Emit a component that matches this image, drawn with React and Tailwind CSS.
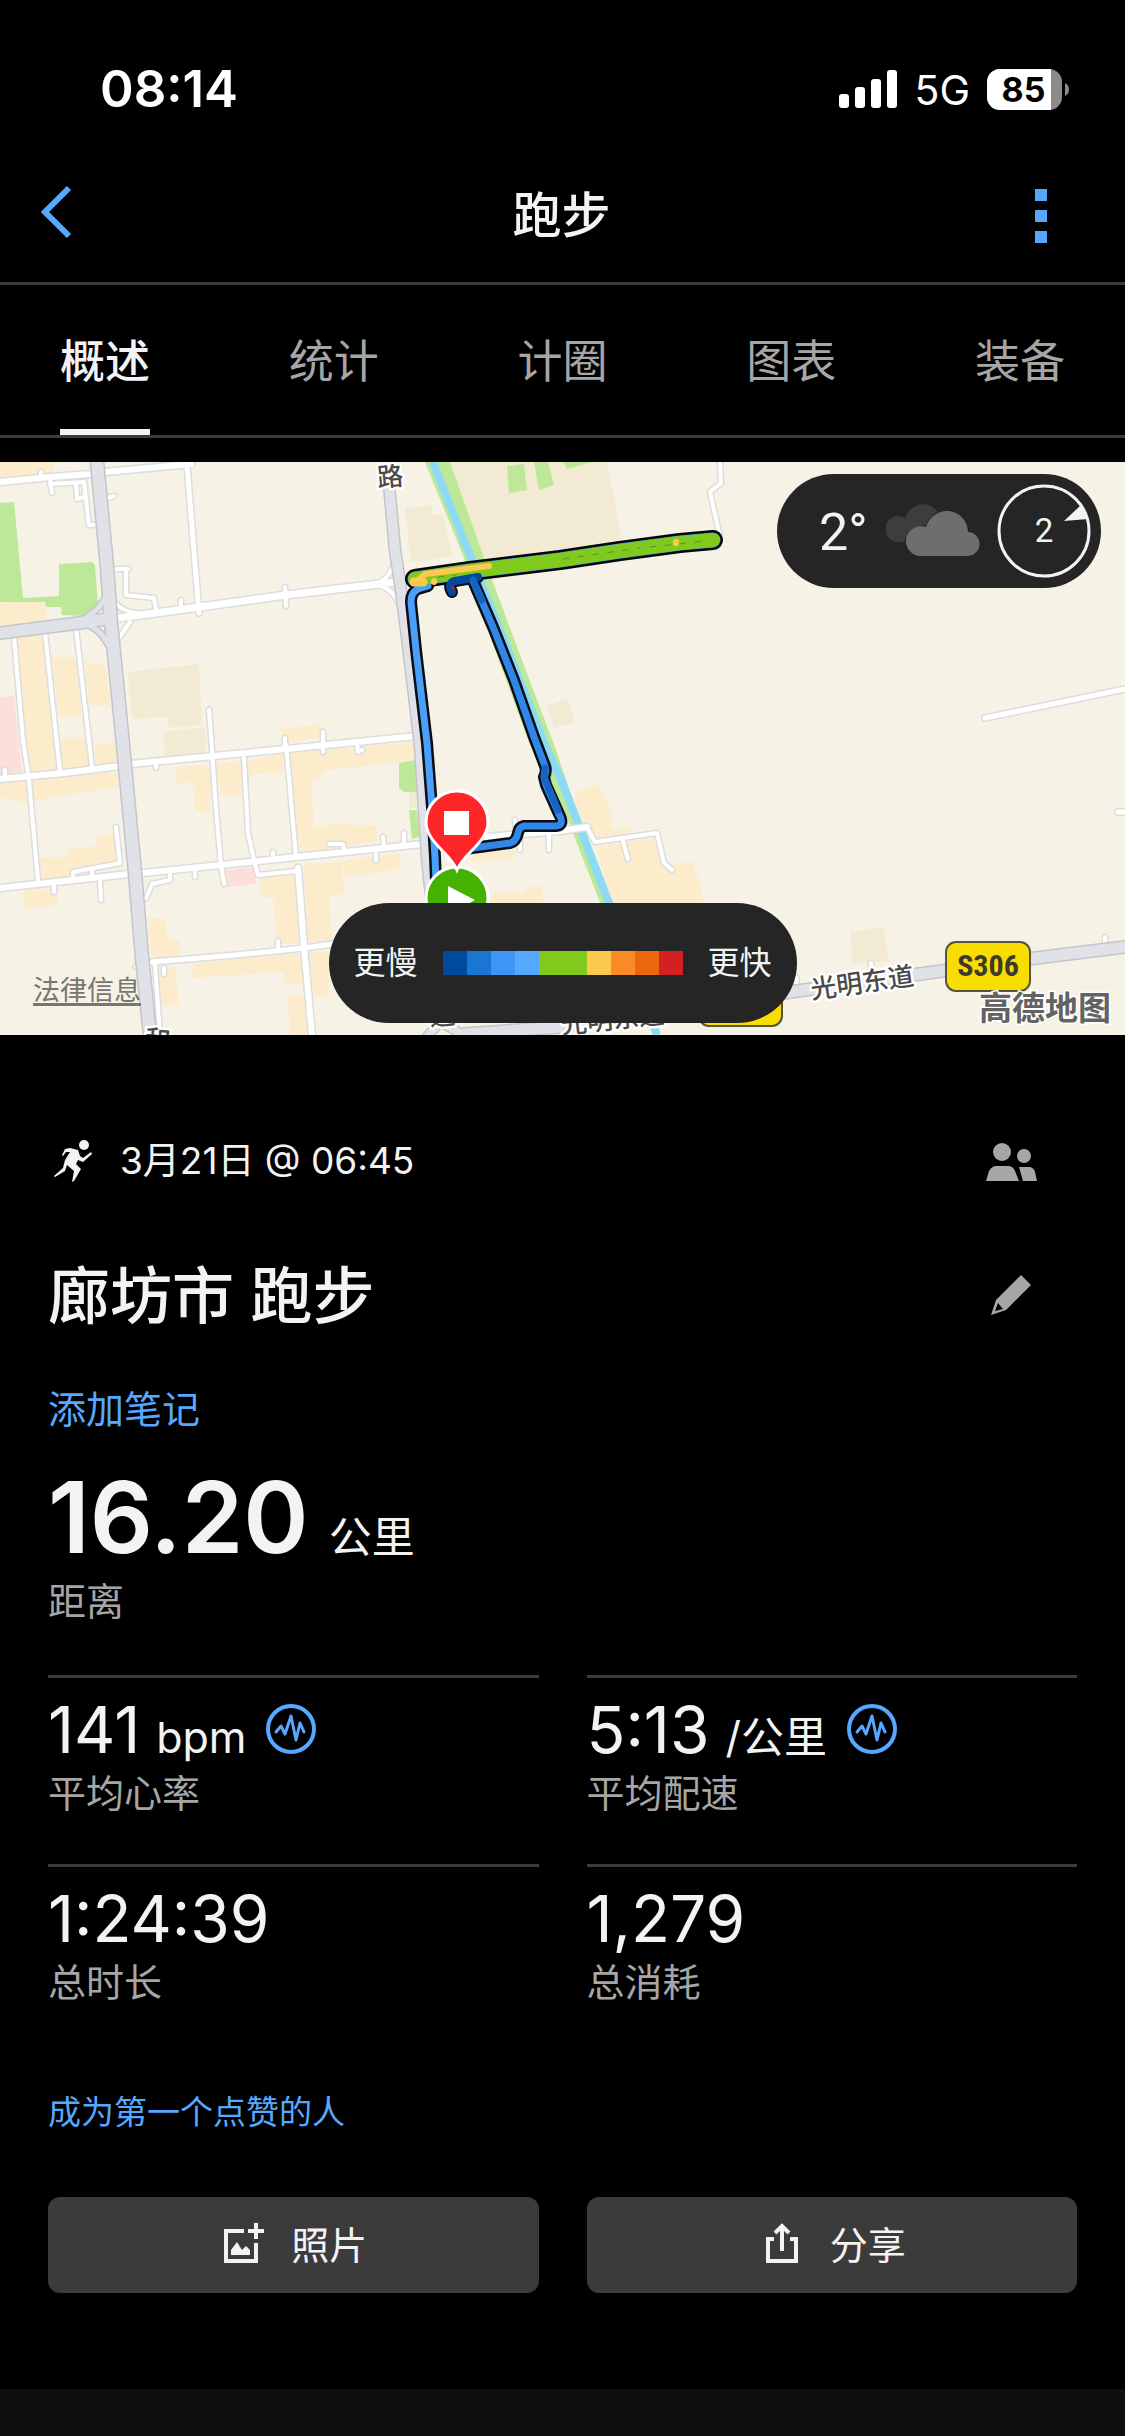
import React from "react";

const TABS = ["概述", "统计", "计圈", "图表", "装备"];

const PACE_COLORS = [
  "bg-[#004a9e]",
  "bg-[#1976d2]",
  "bg-[#3d96f5]",
  "bg-[#56a8ff]",
  "bg-[#82c91e]",
  "bg-[#82c91e]",
  "bg-[#fcc94d]",
  "bg-[#fb8b28]",
  "bg-[#ea670e]",
  "bg-[#d32022]",
];

const GREENS = [
  "0,503 14,502 23,598 59,596 59,564 92,562 95,565 98,605 82,616 62,615 61,607 46,607 45,602 0,602",
  "507,466 524,464 527,490 509,493",
  "534,462 548,462 554,485 539,490",
  "563,462 592,462 567,469",
  "399,763 416,760 417,792 404,792 399,788",
  "409,810 417,810 420,837 412,839",
];

const TANS = [
  "128,672 199,664 202,725 170,728 166,717 132,719",
  "163,732 205,727 206,754 165,757",
  "405,508 432,505 432,514 443,515 452,556 411,562",
  "450,462 607,462 622,540 484,562",
  "546,706 567,699 575,722 554,728",
  "850,932 883,927 889,962 853,964",
  "409,792 417,792 417,808 409,808",
];

const YELLOWS = [
  "0,462 54,462 54,473 0,480",
  "0,603 39,599 46,607 47,620 0,626",
  "17,637 42,635 57,772 28,775",
  "52,658 76,657 82,715 59,718",
  "85,662 106,666 110,706 89,706",
  "61,738 86,737 90,767 62,771",
  "94,746 114,742 118,763 95,767",
  "0,782 118,772 118,787 25,802 0,798",
  "40,858 67,857 68,850 97,845 97,836 114,833 116,863 71,868 71,877 40,880",
  "23,891 57,888 57,905 25,909",
  "148,918 164,918 168,940 180,940 180,958 152,960",
  "155,967 175,967 179,1005 161,1006",
  "193,963 302,953 304,983 285,983 283,972 192,978",
  "307,952 329,951 329,995 308,997",
  "288,996 305,995 309,1035 290,1035",
  "260,875 296,873 299,943 278,944 273,898 261,898",
  "304,864 342,862 344,894 329,896 332,940 307,942",
  "343,860 400,853 401,869 345,877",
  "176,767 211,765 210,811 195,811 195,790 189,782 177,784",
  "215,763 242,761 242,795 221,795",
  "248,760 286,753 284,772 248,775",
  "289,753 416,742 416,760 322,771 322,779 311,780 314,828 326,828 329,824 376,826 377,842 299,853",
  "282,728 323,725 324,738 282,743",
  "471,855 516,850 516,858 471,862",
  "491,893 525,893 527,887 541,886 545,905 491,905",
  "575,792 594,784 600,787 612,815 612,830 630,827 632,835 597,842 590,828 575,810",
  "596,847 657,837 664,865 693,862 705,905 612,905",
];

const PINKS = ["0,697 14,696 22,772 0,775", "226,870 255,867 256,884 227,887"];

const GRAY_ROADS = [
  { d: "M97 462L107 567L111 623L123 745L135 873L142 957L150 1035", w: 12 },
  { d: "M0 633L79 623L107 619", w: 11 },
  { d: "M76 623Q96 614 104 600", w: 5 },
  { d: "M82 623Q98 626 108 644", w: 5 },
  { d: "M389 485L395 550L400 583L407 637L420 745L427 857L434 925", w: 10 },
  { d: "M1125 947L1028 959L913 975L783 993L640 1012L560 1027L464 1034", w: 11 },
  { d: "M424 1040L440 1022L462 1034", w: 8 },
];

const WHITE_ROADS = [
  { d: "M0 482L50 477L92 474M105 472L191 464", w: 6 },
  { d: "M41 472V477M50 480L52 493M50 484L84 482L89 525H96M76 484L77 499L85 497M108 498L114 496", w: 4 },
  { d: "M187 465L199 613", w: 5 },
  { d: "M118 618L200 607L286 595L379 584L396 582", w: 7 },
  { d: "M116 603Q122 612 143 614M130 622L119 638M379 583Q391 576 395 560M379 585Q394 590 399 604", w: 4 },
  { d: "M285 587L286 606M181 600V608M115 569H128M126 569V595L154 598L156 610", w: 4 },
  { d: "M14 637L23 740L29 780L38 880M45 632L60 772M76 628L92 767", w: 4 },
  { d: "M5 770V776", w: 4 },
  { d: "M0 779L64 773L120 766M131 764L214 756L286 749L416 736", w: 6 },
  { d: "M0 888L129 874M143 873L221 865L296 857L423 844M487 837L560 831L587 827", w: 6 },
  { d: "M587 827L595 842L657 833L664 863L672 870M622 838L628 859", w: 4 },
  { d: "M209 710L212 750L216 810L221 865L224 884M244 758L248 833L254 860L258 875L296 871M286 744L296 857", w: 4 },
  { d: "M298 868L304 947L312 1035", w: 6 },
  { d: "M152 962L236 955L304 948L332 944", w: 5 },
  { d: "M155 964L160 1035M116 827L120 863L73 872V878M92 869V875", w: 4 },
  { d: "M100 878L101 900M54 885V892M195 870V877M170 872V880L152 884L146 898M323 732V752M285 738V745M156 766V768M357 743L358 752L362 750", w: 4 },
  { d: "M273 852V858M383 837L384 847M404 833V844M329 844H343L344 848M515 820L517 834M520 838V850M549 835V850M376 854V860M278 941V948M136 967H140M164 968V974", w: 4 },
  { d: "M720 462L721 483L710 492L720 537", w: 4 },
  { d: "M985 718L1125 689M1118 812H1125", w: 5 },
  { d: "M1105 937V946M871 963L872 975M796 977L797 988", w: 4 },
];

function RoadSet({ roads, casing, fill }) {
  return (
    <g fill="none" strokeLinecap="round" strokeLinejoin="round">
      {roads.map((r) => (
        <path key={"c" + r.d} d={r.d} stroke={casing} strokeWidth={r.w + 3} />
      ))}
      {roads.map((r) => (
        <path key={r.d} d={r.d} stroke={fill} strokeWidth={r.w} />
      ))}
    </g>
  );
}

function Polys({ items, fill }) {
  return items.map((p) => <polygon key={p} points={p} fill={fill} />);
}

function MapLabel({ x, y, rotate, children }) {
  return (
    <text
      transform={`translate(${x} ${y}) rotate(${rotate})`}
      className="font-['Noto_Sans_CJK_SC',sans-serif] text-[26px] font-medium"
      fill="#4a4a4a"
      stroke="#ffffff"
      strokeWidth="5"
      strokeLinejoin="round"
      paintOrder="stroke"
    >
      {children}
    </text>
  );
}

function RouteMap() {
  const west = "M428 586L418 589Q411 592 411 602L416 650L427 743L432 807L435 857L437 905";
  const east = "M471 576L493 627L514 680L534 737L545 766Q547 771 544 777L546 785L559 814Q565 825 556 826L524 826Q519 827 518 833Q516 842 510 843L480 847L456 850";
  const north = "M415 579L470 571L560 560L620 551L680 543L713 540";
  const start = "M452 592Q447 583 455 581L478 577";
  return (
    <svg className="block h-[573px] w-full" viewBox="0 462 1125 573" preserveAspectRatio="xMidYMid slice" role="img" aria-label="路线地图">
      <rect x="0" y="462" width="1125" height="573" fill="#f6f2e6" />
      <Polys items={TANS} fill="#f3ead4" />
      <Polys items={YELLOWS} fill="#fceccb" />
      <Polys items={PINKS} fill="#fcdfdb" />
      <Polys items={GREENS} fill="#bde898" />
      <polygon points="425,462 450,462 484,558 520,655 556,750 576,810 613,905 601,905 566,815 530,745 495,650 464,558" fill="#bde898" />
      <path d="M433 462L471 558L504 640L545 745L560 777L582 833L609 903L657 1035" fill="none" stroke="#8cdaf4" strokeWidth="8" />
      <RoadSet roads={WHITE_ROADS} casing="#dcdddd" fill="#ffffff" />
      <RoadSet roads={GRAY_ROADS} casing="#c4c5ca" fill="#e1e2e7" />

      <MapLabel x="378" y="487" rotate="-5">路</MapLabel>
      <MapLabel x="144" y="1048" rotate="5">和</MapLabel>
      <MapLabel x="430" y="1026" rotate="-5">道</MapLabel>
      <MapLabel x="812" y="999" rotate="-8">光明东道</MapLabel>
      <MapLabel x="562" y="1034" rotate="-6">光明东道</MapLabel>

      <g fill="#f9dc00" stroke="#55543c" strokeWidth="2">
        <rect x="946" y="942" width="84" height="49" rx="10" />
        <rect x="699" y="977" width="83" height="49" rx="10" />
      </g>
      <text x="988" y="976" textAnchor="middle" fill="#3b3a2c" className="font-['Liberation_Sans_Narrow','Roboto_Condensed','Open_Sans',sans-serif] text-[30px] font-bold">
        S306
      </text>

      <g fill="none" strokeLinecap="round" strokeLinejoin="round">
        <path d={west} stroke="#0b0f14" strokeWidth="12" />
        <path d={east} stroke="#0b0f14" strokeWidth="12" />
        <path d={start} stroke="#0b1020" strokeWidth="12" />
        <path d={north} stroke="#050805" strokeWidth="20" />
        <path d={west} stroke="#4a9ffb" strokeWidth="7" />
        <path d={east} stroke="#3087e8" strokeWidth="7" />
        <path d={north} stroke="#3d96f5" strokeWidth="15" />
        <path d={north} stroke="#82c91e" strokeWidth="14" />
        <path d="M438 577L456 575M563 559L640 548M650 547L705 541" stroke="#55952a" strokeWidth="1" strokeDasharray="6 9" />
        <path d="M416 582L425 574L489 566" stroke="#fcc94d" strokeWidth="6" />
        <path d="M414 582H423" stroke="#fcc94d" strokeWidth="9" />
        <path d="M434 581V582M676 542V543" stroke="#fcc94d" strokeWidth="6" />
        <path d={start} stroke="#004a9e" strokeWidth="8" />
        <path d="M473 580L482 600M545 768L544 777L558 810" stroke="#1464c0" strokeWidth="7" />
        <path d="M452 587L454 589" stroke="#d32022" strokeWidth="2" />
      </g>

      <circle cx="457" cy="898" r="31" fill="#45b100" stroke="#ffffff" strokeWidth="3" />
      <polygon points="448,886 475,900 448,915" fill="#ffffff" />
      <path d="M457 870C450 853 426 842 426 822A31 31 0 0 1 488 822C488 842 464 853 457 870Z" fill="#ff262a" stroke="#ffffff" strokeWidth="3" />
      <rect x="444" y="811" width="25" height="24" fill="#ffffff" />

      <text
        x="979"
        y="1020"
        className="font-['Noto_Sans_CJK_SC',sans-serif] text-[33px] font-bold"
        fill="#636363"
        stroke="#ffffff"
        strokeWidth="3"
        paintOrder="stroke"
      >
        高德地图
      </text>
    </svg>
  );
}

function Weather() {
  return (
    <div className="absolute right-6 top-3 flex h-[114px] w-[324px] items-center rounded-full bg-[#252525] pl-[42px] pr-[9px] text-[#f3f3f3]">
      <span className="w-[67px] pt-1 font-['Roboto',sans-serif] text-[52px] leading-[60px]">2°</span>
      <svg className="h-[54px] w-[96px]" viewBox="0 0 96 54" aria-hidden="true">
        <path d="M14 38A13 13 0 1 1 19 14C23 4 31 0 37 0C43 0 49 4 52 8Q43 12 40 21Q22 22 18 38Z" fill="#3d3d3d" />
        <path d="M33 52A15 15 0 1 1 40 23C43 13 52 7 61 7C73 7 82 17 82 28A12 12 0 0 1 81 52Z" fill="#6e6e6e" />
      </svg>
      <div className="relative ml-auto flex h-[96px] w-[96px] items-center justify-center">
        <svg className="absolute inset-0 h-full w-full" viewBox="0 0 96 96" aria-hidden="true">
          <circle cx="48" cy="48" r="45" fill="none" stroke="#f3f3f3" strokeWidth="3" />
          <polygon points="68,38 85,22 92,36" fill="#f3f3f3" />
        </svg>
        <span className="font-['Roboto',sans-serif] text-[33px] leading-[40px]">2</span>
      </div>
    </div>
  );
}

function PaceLegend() {
  return (
    <div className="absolute inset-x-0 bottom-3 flex justify-center">
      <div className="flex h-[120px] w-[468px] items-center justify-between rounded-[60px] bg-[#252525] px-[25px] text-[32px] leading-[48px] text-[#f3f3f3]">
        <span>更慢</span>
        <div className="flex">
          {PACE_COLORS.map((c, i) => (
            <span key={i} className={"h-6 w-6 " + c} />
          ))}
        </div>
        <span>更快</span>
      </div>
    </div>
  );
}

function StatusBar() {
  return (
    <div className="flex h-[135px] items-end justify-between pb-[15px] pl-[100px] pr-[56px] text-white">
      <span className="text-[51px] font-semibold leading-[62px]">08:14</span>
      <div className="flex h-[62px] items-center gap-[17px]">
        <svg className="h-[38px] w-[58px]" viewBox="0 0 58 38" fill="#ffffff" aria-hidden="true">
          <rect x="0" y="24" width="10" height="14" rx="3" />
          <rect x="16" y="17" width="10" height="21" rx="3" />
          <rect x="32" y="9" width="10" height="29" rx="3" />
          <rect x="48" y="0" width="10" height="38" rx="3" />
        </svg>
        <span className="pt-[2px] text-[41px] leading-[48px]">5G</span>
        <div className="relative flex h-[41px] w-[82px] items-center">
          <svg className="absolute inset-0 h-full w-full" viewBox="0 0 82 41" aria-hidden="true">
            <rect x="0" y="0" width="75" height="41" rx="13" fill="#8b8b8b" />
            <path d="M13 0H64V41H13A13 13 0 0 1 0 28V13A13 13 0 0 1 13 0Z" fill="#ffffff" />
            <path d="M78 14Q82 16 82 20.500T78 27Z" fill="#8b8b8b" />
          </svg>
          <span className="relative w-[73px] text-center text-[34px] font-bold leading-[41px] text-black">85</span>
        </div>
      </div>
    </div>
  );
}

function PulseIcon() {
  return (
    <svg className="h-[51px] w-[51px]" viewBox="0 0 51 51" fill="none" stroke="#56a8ff" aria-hidden="true">
      <circle cx="25" cy="25" r="23" strokeWidth="4" />
      <path d="M10 28L15 22L19 30L25 12L30 36L34 19L38 28" strokeWidth="3" strokeLinejoin="round" strokeLinecap="round" />
    </svg>
  );
}

function Stat({ value, unit, label, pulse }) {
  return (
    <div className="border-t-[3px] border-[#3c3c3c] pb-[47px] pt-[18px]">
      <div className="flex h-[66px] items-baseline">
        <span className="text-[64px] leading-[68px]">{value}</span>
        {unit && <span className="ml-4 text-[43px] leading-[66px]">{unit}</span>}
        {pulse && (
          <button type="button" aria-label="查看图表" className="ml-5 mt-2 self-start">
            <PulseIcon />
          </button>
        )}
      </div>
      <div className="mt-[7px] text-[38px] leading-[48px] text-[#a6a6a6]">{label}</div>
    </div>
  );
}

export default function App() {
  return (
    <div className="flex min-h-screen flex-col bg-black font-['Inter','Noto_Sans_CJK_SC',sans-serif] text-[#f3f3f3]">
      <StatusBar />

      <header className="grid h-[150px] grid-cols-3 items-center border-b-[3px] border-[#3c3c3c] pl-[38px] pr-[78px] pt-[15px]">
        <button type="button" aria-label="返回" className="w-12 pb-2">
          <svg className="h-[60px] w-[36px]" viewBox="0 0 36 60" fill="none" stroke="#56a8ff" strokeWidth="6" aria-hidden="true">
            <path d="M31 6L7 30L31 54" />
          </svg>
        </button>
        <h1 className="pl-[38px] text-center text-[49px] font-medium leading-[60px]">跑步</h1>
        <button type="button" aria-label="更多" className="grid w-3 gap-[9px] justify-self-end">
          <span className="h-3 bg-[#56a8ff]" />
          <span className="h-3 bg-[#56a8ff]" />
          <span className="h-3 bg-[#56a8ff]" />
        </button>
      </header>

      <nav className="flex h-[153px] justify-between border-b-[3px] border-[#3c3c3c] px-[60px]" aria-label="活动">
        {TABS.map((tab, i) => (
          <button
            key={tab}
            type="button"
            aria-current={i === 0 ? "page" : undefined}
            className={
              i === 0
                ? "border-b-[6px] border-[#f3f3f3] pt-[9px] text-[45px] font-medium leading-[60px]"
                : "border-b-[6px] border-transparent pt-[9px] text-[45px] leading-[60px] text-[#a6a6a6]"
            }
          >
            {tab}
          </button>
        ))}
      </nav>

      <section className="relative mt-6">
        <RouteMap />
        <Weather />
        <a href="#legal" className="absolute bottom-[26px] left-[33px] text-[27px] leading-[36px] text-[#777670] underline decoration-[3px] underline-offset-[3px]">
          法律信息
        </a>
        <PaceLegend />
      </section>

      <main className="px-12 pb-24 pt-[102px]">
        <div className="flex items-center">
          <svg className="h-12 w-12" viewBox="0 0 48 48" aria-hidden="true" fill="#f3f3f3">
            <circle cx="36" cy="8" r="5" />
            <path d="M22 11L30 13L32 19L35 21L43 15L44 17L35 25L30 23L28 27L33 32L26 44L24 45L26 34L19 28L17 34L7 40L6 39L15 31L17 23L22 15L18 15L15 19L14 18L17 12Z" />
          </svg>
          <span className="ml-6 flex-1 text-[37px] leading-[48px]">3月21日 @ 06:45</span>
          <button type="button" aria-label="隐私设置" className="flex w-[132px] justify-center">
            <svg className="h-12 w-[54px]" viewBox="0 0 54 48" fill="#a6a6a6" aria-hidden="true">
              <circle cx="18" cy="15" r="9" />
              <circle cx="40" cy="19" r="7" />
              <path d="M2 44L5 34Q8 29 12 29H24Q29 29 31 34L35 44Z" />
              <path d="M35 30H46Q50 31 51 35L53 44H39Z" />
            </svg>
          </button>
        </div>

        <div className="mt-[76px] flex items-center">
          <h2 className="flex-1 text-[62px] font-medium leading-[72px]">廊坊市 跑步</h2>
          <button type="button" aria-label="编辑名称" className="flex w-[132px] justify-center">
            <svg className="h-12 w-12" viewBox="0 0 48 48" aria-hidden="true">
              <path d="M34 2L44 12L19 37L4 42L9 27Z" fill="#a6a6a6" />
              <path d="M11 30L16 36L8 38Z" fill="#000000" />
            </svg>
          </button>
        </div>

        <a href="#note" className="mt-[52px] block w-fit text-[38px] leading-[48px] text-[#56a8ff]">添加笔记</a>

        <div className="mt-9 flex h-24 items-baseline">
          <span className="text-[99px] font-semibold leading-[96px]">16.20</span>
          <span className="ml-5 text-[43px] leading-[60px]">公里</span>
        </div>
        <div className="mt-3 text-[38px] leading-[48px] text-[#a6a6a6]">距离</div>

        <div className="mt-[50px] grid grid-cols-2 gap-x-12">
          <Stat value="141" unit="bpm" label="平均心率" pulse />
          <Stat value="5:13" unit="/公里" label="平均配速" pulse />
          <Stat value="1:24:39" label="总时长" />
          <Stat value="1,279" label="总消耗" />
        </div>

        <a href="#like" className="mt-[35px] block w-fit text-[33px] leading-[48px] text-[#56a8ff]">成为第一个点赞的人</a>

        <div className="mt-[61px] grid grid-cols-2 gap-x-12 text-[38px] leading-[48px]">
          <button type="button" className="flex h-24 items-center justify-center gap-6 rounded-xl bg-[#3b3b3b]">
            <svg className="h-12 w-12" viewBox="0 0 48 48" fill="none" stroke="#f3f3f3" strokeWidth="4" aria-hidden="true">
              <path d="M25 10H7V40H37V22" />
              <path d="M37 2V18M29 10H45" />
              <path d="M12 34V29L18 21L23 29L27 25L31 29V34Z" fill="#f3f3f3" stroke="none" />
            </svg>
            照片
          </button>
          <button type="button" className="flex h-24 items-center justify-center gap-6 rounded-xl bg-[#3b3b3b]">
            <svg className="h-12 w-12" viewBox="0 0 48 48" fill="none" stroke="#f3f3f3" strokeWidth="4" aria-hidden="true">
              <path d="M16 18H10V40H38V18H32" />
              <path d="M24 30V6M17 12L24 5L31 12" />
            </svg>
            分享
          </button>
        </div>
      </main>

      <div className="min-h-[47px] flex-1 bg-[#0f0f0f]" />
    </div>
  );
}
